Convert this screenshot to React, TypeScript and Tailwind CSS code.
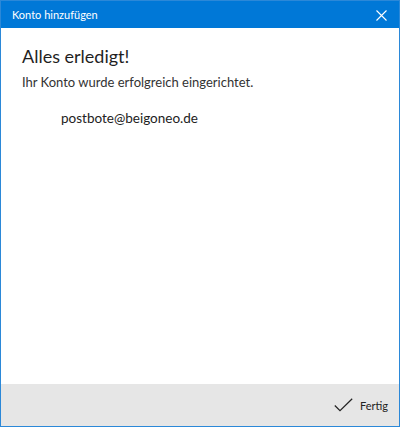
export default function App() {
  return (
    <div className="w-[400px] h-[427px] flex flex-col border border-[#2b88d8] bg-white overflow-hidden" style={{ fontFamily: 'Lato, "Noto Sans", sans-serif' }}>
      <div className="h-[27px] bg-[#0078d7] flex items-center justify-between pl-[11px] pr-[12px] text-white shrink-0">
        <span className="text-[11px] leading-none">Konto hinzufügen</span>
        <svg width="11" height="11" viewBox="0 0 11 11" className="mt-[1px]">
          <path d="M0.5 0.5 L10.5 10.5 M10.5 0.5 L0.5 10.5" stroke="white" strokeWidth="1.1" />
        </svg>
      </div>
      <div className="flex-1 pl-[21px] pt-[15px] text-[#1f1f1f]">
        <div className="text-[18px] leading-[26px]">Alles erledigt!</div>
        <div className="text-[13px] leading-[18px] mt-[4px] text-[#333]">Ihr Konto wurde erfolgreich eingerichtet.</div>
        <div className="text-[13.5px] leading-[18px] mt-[18px] ml-[39px] text-[#222]">postbote@beigoneo.de</div>
      </div>
      <div className="h-[42px] bg-[#e6e6e6] shrink-0 flex items-center justify-end pr-[11px] gap-[7px]">
        <svg width="19" height="14" viewBox="0 0 19 14">
          <path d="M0.8 7.5 L6 12.7 L18.2 0.7" stroke="#222" strokeWidth="1.2" fill="none" />
        </svg>
        <span className="text-[11px] text-[#222] leading-none">Fertig</span>
      </div>
    </div>
  );
}
